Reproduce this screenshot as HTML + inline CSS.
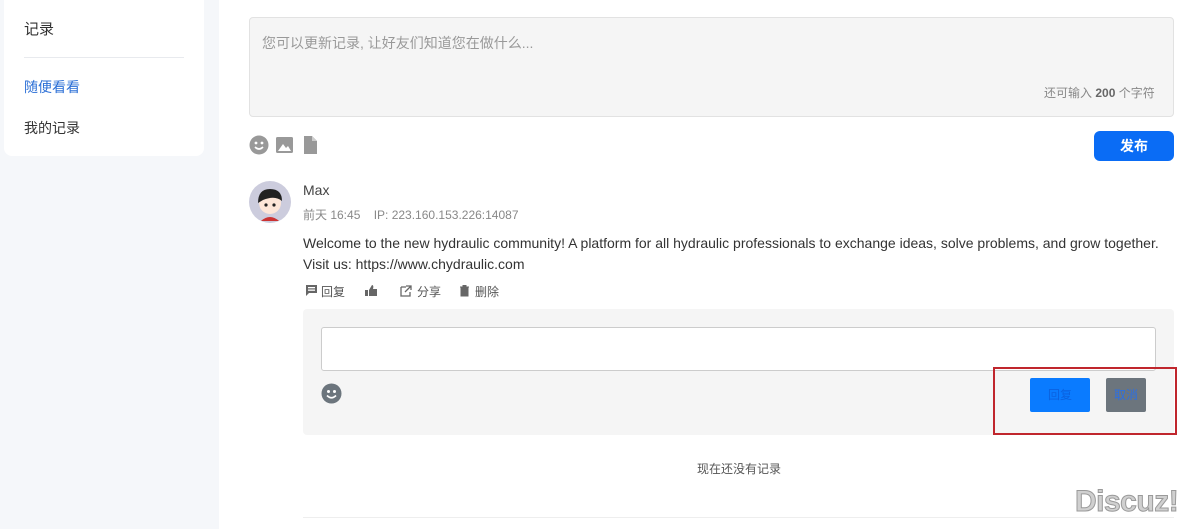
<!DOCTYPE html>
<html><head><meta charset="utf-8"><style>
*{box-sizing:border-box;margin:0;padding:0}
body{width:1198px;height:529px;overflow:hidden;background:#f5f7fa;font-family:"Liberation Sans","Noto Sans CJK SC",sans-serif;position:relative;color:#333}
.abs{position:absolute}
.side{left:4px;top:-10px;width:200px;height:166px;background:#fff;border-radius:8px}
.main{left:219px;top:0;width:979px;height:529px;background:#fff}
.t{font-size:14px;white-space:nowrap}
</style></head><body>
<div class="abs side"></div>
<div class="abs t" style="left:24px;top:18px;font-size:15px;color:#333">记录</div>
<div class="abs" style="left:24px;top:57px;width:160px;height:1px;background:#e8eaee"></div>
<div class="abs t" style="left:24px;top:77px;color:#2b6fd6">随便看看</div>
<div class="abs t" style="left:24px;top:118px;color:#333">我的记录</div>
<div class="abs main"></div>
<div class="abs" style="left:249px;top:17px;width:925px;height:100px;background:#f5f5f5;border:1px solid #e2e2e2;border-radius:4px"></div>
<div class="abs t" style="left:262px;top:33px;color:#999">您可以更新记录, 让好友们知道您在做什么...</div>
<div class="abs t" style="left:1044px;top:84px;font-size:12px;color:#888">还可输入 <b style="color:#666">200</b> 个字符</div>
<svg class="abs" style="left:249px;top:135px" width="72" height="20">
<circle cx="10" cy="10" r="9.5" fill="#999"/><circle cx="7" cy="8" r="1.4" fill="#fff"/><circle cx="13" cy="8" r="1.4" fill="#fff"/><path d="M6 12 Q10 16 14 12" stroke="#fff" stroke-width="1.6" fill="none"/>
<rect x="27" y="2" width="17" height="16" rx="1.5" fill="#999"/><path d="M29 16 L34 9 L37 13 L39 11 L42 16Z" fill="#fff"/>
<path d="M55 1 H63 L68 6 V19 H55Z" fill="#999"/><path d="M63 1 V6 H68" fill="#ccc"/>
</svg>
<div class="abs" style="left:1094px;top:131px;width:80px;height:30px;background:#0a6cf5;border-radius:6px;color:#fff;font-weight:bold;font-size:14px;text-align:center;line-height:30px">发布</div>
<svg class="abs" style="left:249px;top:181px" width="42" height="42"><circle cx="21" cy="21" r="21" fill="#ccd"/><circle cx="21" cy="22" r="11" fill="#fde6d8"/><path d="M9 22 Q9 8 21 8 Q33 8 33 20 Q26 14 14 19Z" fill="#222"/><circle cx="17" cy="24" r="1.6" fill="#222"/><circle cx="25" cy="24" r="1.6" fill="#222"/><path d="M12 40 Q21 32 30 40" fill="#c33"/></svg>
<div class="abs t" style="left:303px;top:182px;color:#444">Max</div>
<div class="abs t" style="left:303px;top:206px;font-size:12px;color:#888">前天 16:45&nbsp;&nbsp;&nbsp; IP: 223.160.153.226:14087</div>
<div class="abs t" style="left:303px;top:233px;color:#333;line-height:21px">Welcome to the new hydraulic community! A platform for all hydraulic professionals to exchange ideas, solve problems, and grow together.<br>Visit us: https://www.chydraulic.com</div>
<svg class="abs" style="left:305px;top:284px" width="190" height="14">
<path d="M1 1 H12 V9 H4 L1 12Z" fill="#666"/><rect x="3" y="3" width="7" height="1.3" fill="#fff"/><rect x="3" y="5.5" width="7" height="1.3" fill="#fff"/>
<path d="M60 6 H63 V12 H60Z M64 6 L67 1 Q69 1 68 5 H72 V12 H64Z" fill="#666"/>
<path d="M96 3 H101 M96 3 V12 H105 V8 M101 2 H106 V6 M106 2 L100 8" stroke="#666" stroke-width="1.3" fill="none"/>
<path d="M155 3 H164 M158 3 V1.5 H161 V3 M156 4 H163 V12 H156Z" stroke="#666" stroke-width="1" fill="#666"/>
</svg>
<div class="abs t" style="left:321px;top:283px;font-size:12px;color:#555">回复</div>
<div class="abs t" style="left:417px;top:283px;font-size:12px;color:#555">分享</div>
<div class="abs t" style="left:475px;top:283px;font-size:12px;color:#555">删除</div>
<div class="abs" style="left:303px;top:309px;width:871px;height:126px;background:#f5f5f5;border-radius:4px"></div>
<div class="abs" style="left:321px;top:327px;width:835px;height:44px;background:#fff;border:1px solid #ccc;border-radius:3px"></div>
<svg class="abs" style="left:321px;top:383px" width="21" height="21"><circle cx="10.5" cy="10.5" r="10" fill="#6c757d"/><circle cx="7.5" cy="8.5" r="1.5" fill="#fff"/><circle cx="13.5" cy="8.5" r="1.5" fill="#fff"/><path d="M6 12.5 Q10.5 17 15 12.5" stroke="#fff" stroke-width="1.6" fill="none"/></svg>
<div class="abs" style="left:1030px;top:378px;width:60px;height:34px;background:#0a7bff;border-radius:2px;color:#0a62e0;font-size:12px;text-align:center;line-height:34px">回复</div>
<div class="abs" style="left:1106px;top:378px;width:40px;height:34px;background:#6c757d;border-radius:2px;color:#2d6fe0;font-size:12px;text-align:center;line-height:34px">取消</div>
<div class="abs" style="left:993px;top:367px;width:184px;height:68px;border:2px solid #c0262d"></div>
<div class="abs t" style="left:697px;top:460px;font-size:12px;color:#555">现在还没有记录</div>
<div class="abs" style="left:303px;top:517px;width:871px;height:1px;background:#eee"></div>
<div class="abs" style="left:1075px;top:485px;font-size:30px;font-weight:bold;color:#d0d0d0;-webkit-text-stroke:1px #9a9a9a;letter-spacing:-0.5px">Discuz!</div>
</body></html>
